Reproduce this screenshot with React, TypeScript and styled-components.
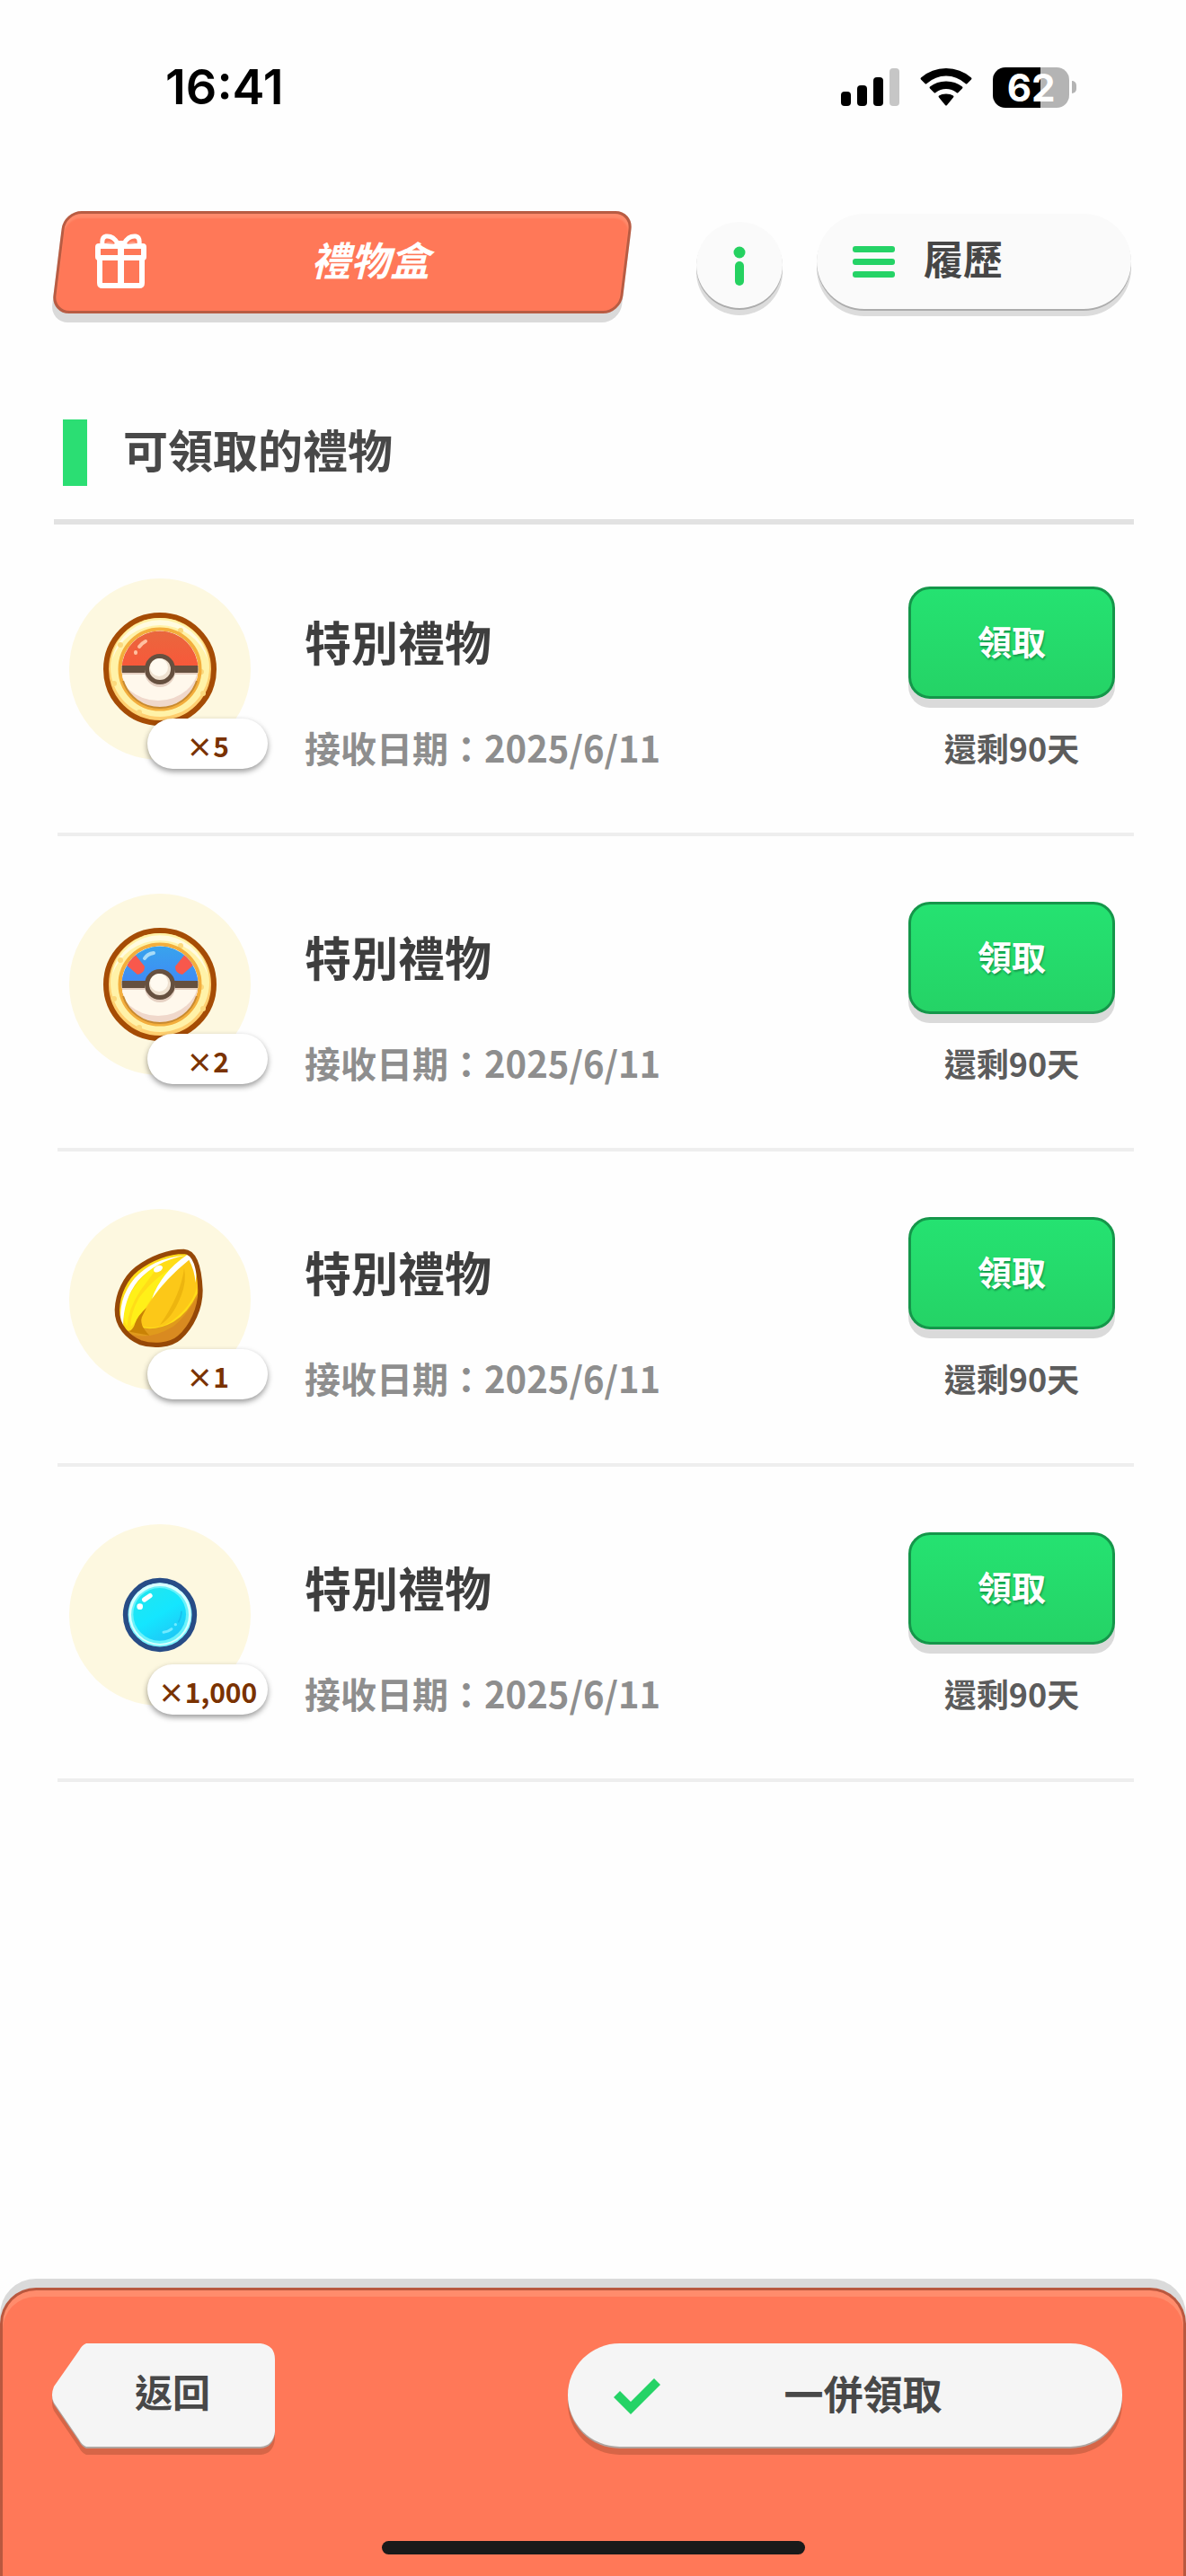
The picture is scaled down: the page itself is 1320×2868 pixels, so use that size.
import React from "react";
import styled, { createGlobalStyle } from "styled-components";

const GlobalStyle = createGlobalStyle`
  *, *::before, *::after { box-sizing: border-box; }
  body {
    margin: 0;
    background: #fefefe;
    color: #3c3c3c;
    font-family: "Noto Sans CJK TC", "Noto Sans", sans-serif;
  }
  button { font: inherit; color: inherit; border: 0; padding: 0; cursor: pointer; }
  h1, h2, h3, p, ul { margin: 0; padding: 0; }
  svg { display: block; }
`;

const Page = styled.div`
  min-height: 100vh;
  display: flex;
  flex-direction: column;
`;

/* ---------- status bar ---------- */

const StatusBar = styled.div`
  display: flex;
  align-items: center;
  justify-content: space-between;
  height: 120px;
  margin-top: 37px;
  padding: 0 122px 0 184px;
  color: #000;
  font-family: Inter, "Liberation Sans", sans-serif;
`;

const Clock = styled.time`
  font-size: 54px;
  line-height: 64px;
  font-weight: 600;
`;

const StatusIcons = styled.div`
  display: flex;
  align-items: center;
  gap: 23px;
`;

const Battery = styled.div`
  display: flex;
  align-items: center;
  gap: 3px;
`;

const BatteryLevel = styled.span`
  width: 85px;
  height: 45px;
  border-radius: 14px;
  display: grid;
  place-items: center;
  background: linear-gradient(90deg, #000 62%, #b4b4b4 62%);
  color: #fff;
  font-size: 42px;
  line-height: 45px;
  font-weight: 700;
`;

const BatteryCap = styled.span`
  width: 5px;
  height: 14px;
  border-radius: 0 7px 7px 0;
  background: #b4b4b4;
`;

/* ---------- header ---------- */

const Header = styled.header`
  display: flex;
  align-items: flex-start;
  margin-top: 78px;
  padding: 0 61px 0 58px;
`;

const TitlePlate = styled.div`
  flex: 1;
  display: grid;
  grid-template-columns: 60px 1fr;
  align-items: center;
  height: 114px;
  margin-right: 71px;
  padding: 0 46px 4px 48px;
  position: relative;
  isolation: isolate;
  color: #fff;

  &::before {
    content: "";
    position: absolute;
    inset: 0 6px;
    z-index: -1;
    transform: skewX(-7deg);
    border: 3px solid #b85c43;
    border-radius: 20px;
    background: #ff7858;
    box-shadow: inset 0 5px 2px #ff8a6b, 0 10px 0 #dadada;
  }
`;

const Title = styled.h1`
  padding-bottom: 4px;
  text-align: center;
  font-size: 44px;
  line-height: 64px;
  font-weight: 700;
  font-style: italic;
`;

const raised = `
  background: #fafafa;
  box-shadow: 0 2px 0 #acacac, 0 8px 0 #dcdcdc;
`;

const InfoButton = styled.button`
  ${raised}
  width: 96px;
  height: 96px;
  margin: 12px 38px 0 0;
  padding-top: 2px;
  border-radius: 50%;
  display: grid;
  place-items: center;
`;

const Label = styled.span`
  padding-bottom: 8px;
  font-size: 44px;
  line-height: 64px;
  font-weight: 700;
`;

const HistoryButton = styled.button`
  ${raised}
  width: 350px;
  height: 106px;
  margin-top: 3px;
  padding: 0 40px;
  border-radius: 53px;
  display: flex;
  align-items: center;
  gap: 32px;
  color: #464646;
`;

/* ---------- gift list ---------- */

const SectionHeading = styled.div`
  display: flex;
  align-items: center;
  gap: 40px;
  margin: 118px 58px 0 60px;
  padding: 0 10px 37px;
  border-bottom: 6px solid #e2e2e2;

  &::before {
    content: "";
    width: 27px;
    height: 74px;
    background: #2bde73;
  }
`;

const SectionTitle = styled.h2`
  padding-bottom: 10px;
  font-size: 50px;
  line-height: 64px;
  font-weight: 700;
  color: #484848;
`;

const GiftList = styled.ul`
  list-style: none;
  margin: -4px 58px 0 64px;
`;

const GiftRow = styled.li`
  display: flex;
  align-items: flex-start;
  height: 351px;
  padding: 0 21px 0 13px;
  border-bottom: 4px solid #eeeeee;
`;

const ItemDisc = styled.div`
  position: relative;
  width: 202px;
  height: 202px;
  margin: 64px 60px 0 0;
  border-radius: 50%;
  display: grid;
  place-items: center;
  background: #fdf8e0;
`;

const Quantity = styled.span`
  position: absolute;
  left: 87px;
  top: 156px;
  width: 134px;
  height: 56px;
  border-radius: 28px;
  background: #fff;
  box-shadow: 0 3px 6px rgba(0, 0, 0, 0.4);
  color: #7a3200;
  text-align: center;
  font-size: 30px;
  line-height: 60px;
  font-weight: 700;
`;

const GiftText = styled.div`
  flex: 1;
  display: flex;
  flex-direction: column;
  gap: 64px;
  padding-top: 104px;
`;

const GiftName = styled.h3`
  font-size: 52px;
  line-height: 60px;
  font-weight: 700;
  color: #3e3e3e;
`;

const GiftDate = styled.p`
  font-size: 40px;
  line-height: 48px;
  font-weight: 700;
  color: #8e8e8e;
`;

const GiftAction = styled.div`
  display: flex;
  flex-direction: column;
  align-items: center;
  gap: 30px;
  padding-top: 73px;
`;

const ClaimButton = styled.button`
  width: 230px;
  height: 125px;
  padding-bottom: 6px;
  border: 3px solid #15964a;
  border-radius: 24px;
  background: linear-gradient(#25e271, #25d366);
  box-shadow: 0 10px 0 #dadada;
  color: #fff;
  text-shadow: 1px 2px 2px #159a4c;
  font-size: 38px;
  line-height: 56px;
  font-weight: 700;
`;

const Remaining = styled.p`
  font-size: 36px;
  line-height: 48px;
  font-weight: 700;
  color: #5c5c5c;
`;

/* ---------- footer ---------- */

const Footer = styled.footer`
  margin-top: auto;
  display: flex;
  flex-direction: column;
  align-items: center;
  padding: 59px 0 24px;
  border: 3px solid #b9583f;
  border-bottom: 0;
  border-radius: 40px 40px 0 0;
  background: #ff7858;
  box-shadow: inset 0 7px 0 #ff8c6c, 0 -10px 0 #dadada;
`;

const FooterActions = styled.div`
  width: 100%;
  display: flex;
  justify-content: space-between;
  margin-bottom: 104px;
  padding: 0 68px 0 55px;
  color: #484848;
`;

const BackButton = styled.button`
  position: relative;
  isolation: isolate;
  width: 248px;
  height: 116px;
  padding: 0 0 2px 20px;
  background: none;
`;

const BackShape = styled.svg`
  position: absolute;
  inset: 0;
  z-index: -1;
  overflow: visible;
`;

const BackLabel = styled(Label)`
  display: block;
  font-size: 42px;
`;

const ClaimAllButton = styled.button`
  display: grid;
  grid-template-columns: 52px 1fr;
  align-items: center;
  width: 617px;
  height: 115px;
  padding: 2px 63px 0 51px;
  border-radius: 58px;
  background: #f5f5f5;
  box-shadow: 0 2px 0 #b0a5a0, 0 9px 0 #d66547;
`;

const HomeIndicator = styled.div`
  width: 471px;
  height: 15px;
  border-radius: 8px;
  background: #1a1a1a;
`;

/* ---------- drawings ---------- */

const SignalIcon = () => (
  <svg width="65" height="42" viewBox="0 0 65 42" aria-hidden="true">
    <rect x="0" y="26" width="11" height="16" rx="4" />
    <rect x="18" y="19" width="11" height="23" rx="4" />
    <rect x="36" y="10" width="11" height="32" rx="4" />
    <rect x="54" y="0" width="11" height="42" rx="4" fill="#c6c6c6" />
  </svg>
);

const WifiIcon = () => (
  <svg width="58" height="42" viewBox="0 0 58 42" aria-hidden="true">
    <path d="M1 12.500Q0 11.500 1 10.500Q13 0 29 0T57 10.500Q58 11.500 57 12.500L52.500 17Q51.500 18 50.500 17Q41 8.500 29 8.500T7.500 17Q6.500 18 5.500 17Z" />
    <path d="M11 22.500Q10 21.500 11 20.500Q18.500 14.500 29 14.500T47 20.500Q48 21.500 47 22.500L42.500 27Q41.500 28 40.500 27Q35.500 23 29 23T17.500 27Q16.500 28 15.500 27Z" />
    <path d="M21 32.500Q20 31.500 21 30.500Q24 28.500 29 28.500T37 30.500Q38 31.500 37 32.500L30 41Q29 42 28 41Z" />
  </svg>
);

const GiftIcon = () => (
  <svg width="57" height="61" viewBox="0 0 57 61" fill="none" stroke="#fff" aria-hidden="true">
    <rect x="3" y="14" width="51" height="13" rx="1" strokeWidth="6" />
    <path d="M5 28V55Q5 58 8 58H49Q52 58 52 55V28" strokeWidth="6" />
    <path d="M28.500 8V58" strokeWidth="7" />
    <path
      d="M25 11Q20 2 12 3Q7 4 8 12M32 11Q37 2 45 3Q50 4 49 12"
      strokeWidth="5"
    />
    <path d="M11 11Q15 6 22 12ZM46 11Q42 6 35 12Z" strokeWidth="0" fill="#ff9a82" />
  </svg>
);

const InfoIcon = () => (
  <svg width="14" height="44" viewBox="0 0 14 44" fill="#25d160" aria-hidden="true">
    <circle cx="7" cy="7" r="6.500" />
    <rect x="2" y="17" width="10" height="27" rx="5" />
  </svg>
);

const MenuIcon = () => (
  <svg width="47" height="35" viewBox="0 0 47 35" fill="#25d366" aria-hidden="true">
    <rect width="47" height="7" rx="3" />
    <rect y="14" width="47" height="7" rx="3" />
    <rect y="28" width="47" height="7" rx="3" />
  </svg>
);

const CheckIcon = () => (
  <svg width="52" height="40" viewBox="0 0 52 40" fill="#25d366" aria-hidden="true">
    <path d="M0 21L7 14L19 26L45 0L52 7L19 40Z" />
  </svg>
);

const BallCoin = ({ great = false }: { great?: boolean }) => {
  const id = great ? "great" : "poke";
  const [from, to] = great ? ["#38a5ec", "#3f8af5"] : ["#e8683e", "#f8583a"];
  return (
    <svg width="126" height="126" viewBox="0 0 126 126" aria-hidden="true">
      <defs>
        <linearGradient id={`${id}-top`} x2="0" y2="1">
          <stop offset="0" stopColor={from} />
          <stop offset="1" stopColor={to} />
        </linearGradient>
        <clipPath id={`${id}-clip`}>
          <circle cx="63" cy="63" r="42.500" />
        </clipPath>
      </defs>
      <circle cx="63" cy="63" r="60" fill="#ffcf70" stroke="#a54c05" strokeWidth="6" />
      <circle cx="63" cy="61" r="55" fill="#fff2a8" />
      <path d="M10 52A54 54 0 0 1 116 52A56 56 0 0 0 10 52Z" fill="#fffbe0" />
      <g fill="#fbd87c">
        <circle cx="19" cy="36" r="3" />
        <circle cx="86" cy="20" r="3" />
        <circle cx="12" cy="79" r="3" />
        <circle cx="109" cy="66" r="3" />
        <circle cx="40" cy="111" r="3" />
        <circle cx="111" cy="90" r="3" />
      </g>
      <circle cx="63" cy="63" r="44.500" fill="#fff" stroke="#f3ae3c" strokeWidth="4" />
      <g clipPath={`url(#${id}-clip)`}>
        <rect x="18" y="18" width="90" height="90" fill="#f0d8cb" />
        <ellipse cx="61" cy="58" rx="45" ry="40" fill="#fff8ec" />
        <rect x="18" y="18" width="90" height="43" fill={`url(#${id}-top)`} />
        {great && (
          <path
            d="M22 33L34 28L46 43Q46 51 38 52L24 40ZM104 33L92 28L80 43Q80 51 88 52L102 40Z"
            fill="#f8584c"
          />
        )}
        <rect x="18" y="65" width="90" height="4" fill="#e5d0c2" />
        <rect x="18" y="59" width="90" height="8" fill="#66503f" />
      </g>
      <path d="M22 76A43 43 0 0 0 104 76" fill="none" stroke="#c88a30" strokeWidth="2" />
      <circle cx="63" cy="66" r="17" fill="#e5d0c2" />
      <circle cx="63" cy="63" r="14.500" fill="#eee0cf" stroke="#66503f" strokeWidth="5" />
      <circle cx="62" cy="61" r="10" fill="#fffaf0" />
      {great ? (
        <path d="M46 34Q49 29 56 28" stroke="#a8dcf8" strokeWidth="4" strokeLinecap="round" fill="none" />
      ) : (
        <path d="M36 45V44M40 38Q43 34 47 32" stroke="#ffc0a0" strokeWidth="4" strokeLinecap="round" fill="none" />
      )}
    </svg>
  );
};

const SEED_OUTLINE =
  "M435 190C480 192 488 270 490 320C490 380 462 440 420 478C390 505 330 508 290 494C250 478 211 440 212 385C214 330 240 278 278 248C325 212 385 190 435 190Z";

const SeedIcon = () => (
  <svg width="126" height="126" viewBox="166 162 378 378" aria-hidden="true">
    <defs>
      <clipPath id="seed-clip">
        <path d={SEED_OUTLINE} />
      </clipPath>
    </defs>
    <g clipPath="url(#seed-clip)">
      <rect x="190" y="170" width="320" height="350" fill="#e09a1c" />
      <path d="M225 450Q300 500 400 440Q440 410 480 340V400L420 520H240Z" fill="#d98a20" />
      <path d="M200 440V170H480V330Q450 395 400 425Q345 455 295 445L300 400L265 450Q220 470 200 440Z" fill="#ffdd18" />
      <path d="M450 215Q350 310 305 385Q285 420 298 440Q360 455 410 410Q470 360 480 300Q480 250 450 215Z" fill="#fcc818" />
      <path d="M436 245Q425 335 355 435Q395 415 425 340Q445 290 436 245Z" fill="#edb50f" />
      <path d="M432 225Q345 265 285 345Q255 400 258 440Q275 430 312 370Q370 275 432 225Z" fill="#fff018" />
      <path d="M360 225Q265 285 236 380Q230 415 245 440Q250 380 290 320Z" fill="#fff018" />
      <path d="M310 378Q280 405 272 430Q268 446 254 458L320 470Q285 435 294 410Z" fill="#c98205" />
      <path d="M445 202Q360 260 328 348Q375 280 452 218Q470 250 474 295Q482 235 460 202Z" fill="#fff" />
      <path d="M226 440Q212 350 270 280Q330 212 440 203Q340 222 282 288Q232 350 232 440Z" fill="#fff" />
      <ellipse cx="349" cy="248" rx="16" ry="10" transform="rotate(-28 349 248)" fill="#fff" />
    </g>
    <path d={SEED_OUTLINE} fill="none" stroke="#964807" strokeWidth="16" />
  </svg>
);

const GemIcon = () => (
  <svg width="126" height="126" viewBox="166 164 378 378" aria-hidden="true">
    <defs>
      <linearGradient id="gem-fill" x1="0.200" y1="0" x2="0.800" y2="1">
        <stop offset="0" stopColor="#22e6ee" />
        <stop offset="0.500" stopColor="#14e6ff" />
        <stop offset="1" stopColor="#20c4f5" />
      </linearGradient>
    </defs>
    <circle cx="355" cy="353" r="115" fill="#7af4ff" stroke="#274c86" strokeWidth="17" />
    <circle cx="355" cy="350" r="104" fill="#d8ffff" />
    <circle cx="355" cy="353" r="96" fill="#6af2fa" />
    <circle cx="354" cy="351" r="88" fill="url(#gem-fill)" />
    <path d="M303 302L322 289" stroke="#fff" strokeWidth="16" strokeLinecap="round" />
    <circle cx="288" cy="325" r="10" fill="#fff" />
    <path d="M367 411Q385 408 394 400" stroke="#70eaff" strokeWidth="9" strokeLinecap="round" fill="none" />
    <circle cx="407" cy="385" r="5" fill="#70eaff" />
    <path d="M427 340Q426 362 416 378" stroke="#18c0ee" strokeWidth="5" fill="none" />
  </svg>
);

/* ---------- screen ---------- */

const gifts = [
  { icon: <BallCoin />, quantity: "×5" },
  { icon: <BallCoin great />, quantity: "×2" },
  { icon: <SeedIcon />, quantity: "×1" },
  { icon: <GemIcon />, quantity: "×1,000" },
];

const BACK_OUTLINE =
  "M38 0H232Q248 2 248 18V98Q246 114 232 115H38Q33 113 30 107L2 66Q-2 58 2 48L30 8Q33 2 38 0Z";

export default function App() {
  return (
    <Page>
      <GlobalStyle />
      <StatusBar>
        <Clock>16:41</Clock>
        <StatusIcons>
          <SignalIcon />
          <WifiIcon />
          <Battery>
            <BatteryLevel>62</BatteryLevel>
            <BatteryCap />
          </Battery>
        </StatusIcons>
      </StatusBar>

      <Header>
        <TitlePlate>
          <GiftIcon />
          <Title>禮物盒</Title>
        </TitlePlate>
        <InfoButton aria-label="說明">
          <InfoIcon />
        </InfoButton>
        <HistoryButton>
          <MenuIcon />
          <Label>履歷</Label>
        </HistoryButton>
      </Header>

      <main>
        <SectionHeading>
          <SectionTitle>可領取的禮物</SectionTitle>
        </SectionHeading>
        <GiftList>
          {gifts.map(({ icon, quantity }) => (
            <GiftRow key={quantity}>
              <ItemDisc>
                {icon}
                <Quantity>{quantity}</Quantity>
              </ItemDisc>
              <GiftText>
                <GiftName>特別禮物</GiftName>
                <GiftDate>接收日期：2025/6/11</GiftDate>
              </GiftText>
              <GiftAction>
                <ClaimButton>領取</ClaimButton>
                <Remaining>還剩90天</Remaining>
              </GiftAction>
            </GiftRow>
          ))}
        </GiftList>
      </main>

      <Footer>
        <FooterActions>
          <BackButton>
            <BackShape width="248" height="116" viewBox="0 0 248 116" aria-hidden="true">
              <path d={BACK_OUTLINE} transform="translate(0 9)" fill="#d66547" />
              <path d={BACK_OUTLINE} transform="translate(0 2)" fill="#b0a5a0" />
              <path d={BACK_OUTLINE} fill="#f5f5f5" />
            </BackShape>
            <BackLabel>返回</BackLabel>
          </BackButton>
          <ClaimAllButton>
            <CheckIcon />
            <Label>一併領取</Label>
          </ClaimAllButton>
        </FooterActions>
        <HomeIndicator />
      </Footer>
    </Page>
  );
}
